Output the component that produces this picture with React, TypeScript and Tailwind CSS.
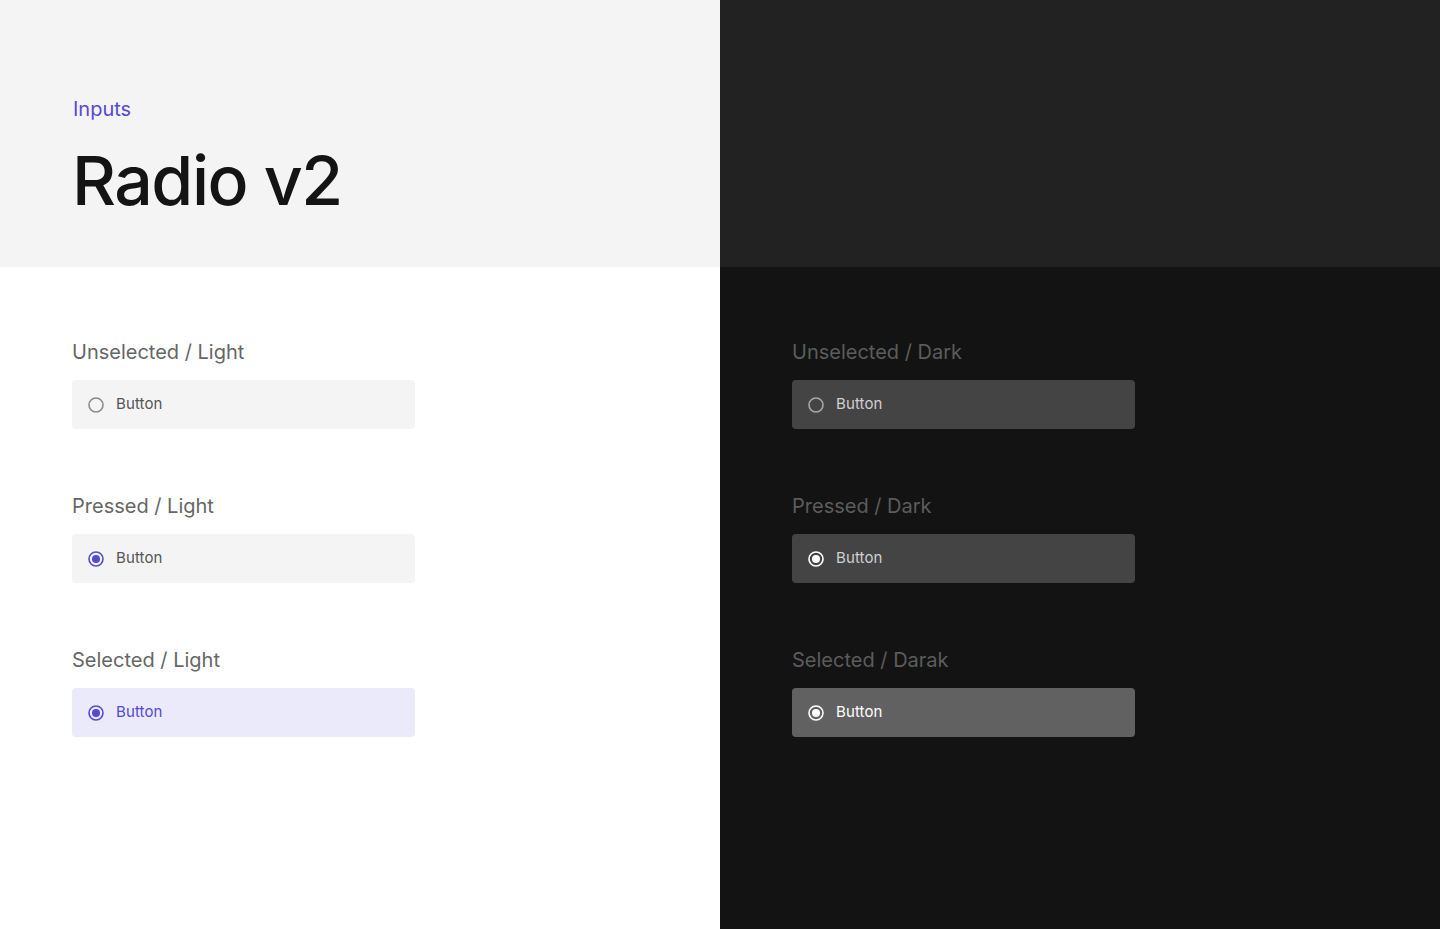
const font = { fontFamily: "Inter, 'Noto Sans', sans-serif" };

type Variant = "unselected" | "pressed" | "selected";

const Radio = ({ variant, dark }: { variant: Variant; dark: boolean }) => {
  const on = variant !== "unselected";
  const color = dark ? (on ? "#ffffff" : "#a8a8a8") : on ? "#5548d4" : "#8a8a8a";
  return (
    <svg width="16" height="16" viewBox="0 0 16 16">
      <circle cx="8" cy="8" r="7" fill="none" stroke={color} strokeWidth="1.6" />
      {on && <circle cx="8" cy="8" r="4" fill={color} />}
    </svg>
  );
};

const Item = ({ label, variant, dark }: { label: string; variant: Variant; dark: boolean }) => {
  let box = "bg-[#f4f4f4] text-[#555555]";
  if (dark) box = variant === "selected" ? "bg-[#616161] text-white" : "bg-[#444444] text-[#d0d0d0]";
  else if (variant === "selected") box = "bg-[#ebeafa] text-[#5548d4]";
  return (
    <div className="flex flex-col">
      <div className={`text-[20px] leading-6 ${dark ? "text-[#5c5c5c]" : "text-[#666666]"}`}>{label}</div>
      <div className={`mt-4 w-[343px] h-[49px] rounded flex items-center pl-4 gap-3 ${box}`}>
        <Radio variant={variant} dark={dark} />
        <span className="text-[15px] tracking-[0.1px]">Button</span>
      </div>
    </div>
  );
};

export default function App() {
  return (
    <div className="grid grid-cols-2 w-[1440px] h-[929px]" style={font}>
      <div className="flex flex-col bg-white">
        <div className="h-[267px] bg-[#f4f4f4] px-[72px] pt-[97px]">
          <div className="text-[20px] leading-6 text-[#5548d4] pl-px">Inputs</div>
          <h1 className="mt-[21px] text-[68px] leading-[76px] font-medium tracking-[-1.5px] text-[#141414]">
            Radio v2
          </h1>
        </div>
        <div className="flex flex-col gap-[65px] px-[72px] pt-[73px]">
          <Item label="Unselected / Light" variant="unselected" dark={false} />
          <Item label="Pressed / Light" variant="pressed" dark={false} />
          <Item label="Selected / Light" variant="selected" dark={false} />
        </div>
      </div>
      <div className="flex flex-col bg-[#131313]">
        <div className="h-[267px] bg-[#222222]" />
        <div className="flex flex-col gap-[65px] px-[72px] pt-[73px]">
          <Item label="Unselected / Dark" variant="unselected" dark />
          <Item label="Pressed / Dark" variant="pressed" dark />
          <Item label="Selected / Darak" variant="selected" dark />
        </div>
      </div>
    </div>
  );
}
